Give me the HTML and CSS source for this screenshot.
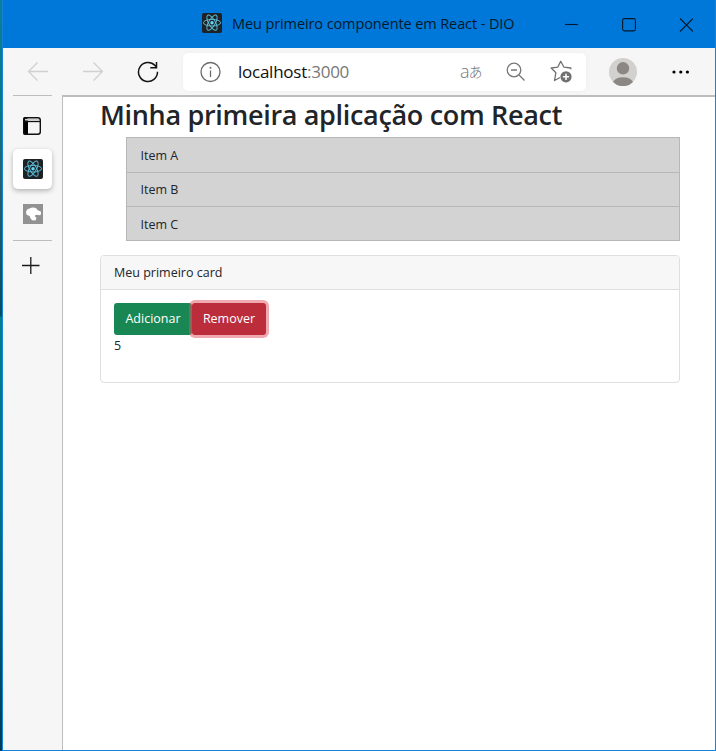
FILE: index.html
```html
<!DOCTYPE html>
<html lang="pt-BR">
<head>
<meta charset="utf-8">
<title>Meu primeiro componente em React - DIO</title>
<link rel="stylesheet" href="styles.css">
</head>
<body>
<svg width="0" height="0" class="defs">
  <symbol id="react" viewBox="0 0 20 20">
    <rect width="20" height="20" rx="2" fill="#202124"/>
    <g fill="none" stroke="#58b9d2" stroke-width="1">
      <ellipse cx="10" cy="9.700" rx="8.600" ry="3.300"/>
      <ellipse cx="10" cy="9.700" rx="8.600" ry="3.300" transform="rotate(60 10 9.7)"/>
      <ellipse cx="10" cy="9.700" rx="8.600" ry="3.300" transform="rotate(120 10 9.7)"/>
    </g>
    <circle cx="10" cy="9.700" r="1.700" fill="#61dafb"/>
  </symbol>
</svg>
<div class="desktop">
  <div class="window">
    <header class="titlebar">
      <svg class="favicon" width="20" height="20"><use href="#react"/></svg>
      <span class="title">Meu primeiro componente em React - DIO</span>
      <svg class="controls" width="128" height="20" fill="none" stroke="#06192c" stroke-width="1.1">
        <path d="M0 11.500h13"/>
        <rect x="57.600" y="5.600" width="12.800" height="12.300" rx="1.800"/>
        <path d="M115 5.500l13 13M128 5.500l-13 13"/>
      </svg>
    </header>
    <nav class="toolbar">
      <svg class="back" width="22" height="20" fill="none" stroke="#d0d0d0" stroke-width="1.3"><path d="M21 9.500H1.500M10.500 .5L1.500 9.500l9 9"/></svg>
      <svg class="forward" width="22" height="20" fill="none" stroke="#d0d0d0" stroke-width="1.3"><path d="M1 9.500h19.500M11.500 .5l9 9-9 9"/></svg>
      <svg class="reload" width="22" height="22" fill="none" stroke="#151515" stroke-width="1.5"><path d="M20.500 10.700A9.500 9.500 0 1 1 18 4.600L19.500 6.300M19.500 1v5.700H13.300"/></svg>
      <div class="address">
        <svg class="info" width="22" height="22" fill="none" stroke="#6b6b6b" stroke-width="1.3"><circle cx="11.500" cy="11" r="9.500"/><path d="M11.500 9.500v6.500"/><circle cx="11.500" cy="6.800" r=".4" fill="#6b6b6b"/></svg>
        <span class="url">localhost<span class="port">:3000</span></span>
        <span class="translate"><span>a</span><span class="kana">あ</span></span>
        <svg class="search" width="20" height="20" fill="none" stroke="#777" stroke-width="1.3"><circle cx="8" cy="8" r="6.800"/><path d="M5 8h6M13 13l5.500 5.500"/></svg>
        <svg class="star" width="24" height="23" fill="none" stroke="#707070" stroke-width="1.300" stroke-linejoin="round"><path d="M20.800 9.200V8L14 7.200 10.700 1.200 7.700 7.200 1.200 8l4.700 4.700L4.500 20.500l5.500-3"/><circle cx="16" cy="16.800" r="5.600" fill="#707070" stroke="none"/><path stroke="#fff" stroke-width="1.500" d="M16 13.700v6.200M12.900 16.800h6.200"/></svg>
      </div>
      <svg class="avatar" width="28" height="28"><circle cx="14" cy="14" r="14" fill="#d3d1ce"/><circle cx="14" cy="10.300" r="6.200" fill="#8b8784"/><path d="M4 24a10.500 7 0 0 1 20 0a14 14 0 0 1-20 0" fill="#8b8784"/></svg>
      <svg class="more" width="18" height="4"><circle cx="2" cy="2" r="1.600"/><circle cx="8.800" cy="2" r="1.600"/><circle cx="15.400" cy="2" r="1.600"/></svg>
    </nav>
    <div class="body">
      <aside class="sidebar">
        <hr>
        <svg class="tabs" width="18" height="18"><path d="M4 0H1.800Q0 0 0 2v14q0 2 2 2h3V4z"/><rect x=".7" y=".7" width="16.600" height="16.600" rx="2.500" fill="none" stroke="#111" stroke-width="1.400"/><path d="M0 4.500h18" stroke="#111" stroke-width="1.300"/><path d="M2 2.700h14" stroke="#ccc" stroke-width="1.600"/></svg>
        <div class="active"><svg width="20" height="20"><use href="#react"/></svg></div>
        <svg class="site" width="20" height="20"><rect width="20" height="20" fill="#929292"/><path fill="#fff" d="M3 9q0-4 3.500-4.500Q10 2.500 13.500 4.500l1 1.500 3.500 1.700v2.600l-1 .9-4-.4-1.300 1.200 1.800 2-1 2.500-3.500-.3-2-2.700-.3-1.600L4 11z"/></svg>
        <hr>
        <svg class="plus" width="18" height="18"><path d="M0 8.500h17.500M8.800 0v17" stroke="#1b1b1b" stroke-width="1.300"/></svg>
      </aside>
      <main class="page">
        <h1>Minha primeira aplicação com React</h1>
        <ul class="list">
          <li>Item A</li>
          <li>Item B</li>
          <li>Item C</li>
        </ul>
        <section class="card">
          <div class="card-header"><span>Meu primeiro card</span></div>
          <div class="card-body">
            <div class="buttons"><button class="add">Adicionar</button><button class="remove">Remover</button></div>
            <p>5</p>
          </div>
        </section>
      </main>
    </div>
  </div>
</div>
</body>
</html>
```
FILE: styles.css
```css
* { box-sizing: border-box; }
body { margin: 0; font-family: "Open Sans", "Noto Sans CJK JP", sans-serif; color: #212529; }
svg { display: block; flex: none; }
.defs { position: absolute; }
.desktop { height: 751px; padding-left: 2px; background: linear-gradient(#087f9b 0, #087985 100px, #286469 180px, #064f60 316px, #007f8c 317px, #007487 500px, #003d55 751px); }
.window { width: 714px; height: 751px; border: 1px solid #1683d8; border-top: 0; background: #fff; display: flex; flex-direction: column; }
.titlebar { height: 48px; flex: none; background: #0078d9; display: flex; align-items: flex-start; padding: 13px 0 0 199px; white-space: nowrap; }
.title { width: 333px; margin-left: 10px; font-size: 14.5px; line-height: 20px; color: #04192d; letter-spacing: -.1px; padding-top: 1px; }
.toolbar { height: 47px; flex: none; background: #f6f6f6; display: flex; align-items: center; padding-left: 24px; }
.forward { margin-left: 33px; }
.reload { margin-left: 33px; }
.address { display: flex; align-items: center; width: 403px; height: 38px; margin-left: 24px; padding-left: 16px; border-radius: 5px; background: #fff; box-shadow: 0 0 4px #0000000a; }
.url { width: 222px; margin-left: 17px; font-size: 17px; line-height: 24px; color: #111; letter-spacing: -.25px; }
.port { color: #777; }
.translate { display: flex; align-items: center; width: 23px; font-size: 18px; line-height: 22px; color: #777; font-weight: 300; }
.translate > span { position: relative; top: -1px; }
.translate .kana { font-family: "Noto Sans CJK JP", sans-serif; font-size: 14px; margin-left: -1px; }
.search { margin-left: 23px; }
.star { margin-left: 24px; }
.avatar { margin-left: 23px; }
.more { margin-left: 35px; }
.body { display: flex; flex: 1; background: #f6f6f6; }
.sidebar { width: 59px; display: flex; flex-direction: column; align-items: flex-start; padding-left: 10px; }
hr { width: 39px; height: 1px; margin: 0; border: 0; background: #bdbdbd; }
.tabs { margin: 21px 0 0 10px; }
.active { width: 39px; height: 40px; margin-top: 14px; padding: 10px; border-radius: 5px; background: #fff; box-shadow: 0 2px 5px #0004; }
.site { margin: 15px 0 16px 10px; }
.plus { margin: 16px 0 0 9px; }
.page { flex: 1; border-top: 2px solid #bdbdbd; border-left: 1px solid #bdbdbd; background: #fff; padding: 0 35px 0 37px; }
h1 { margin: 0; height: 40px; font-size: 27px; line-height: 35px; font-weight: 600; letter-spacing: -.32px; white-space: nowrap; }
.list { list-style: none; margin: 0 0 14px 26px; padding: 0; border: 1px solid #b7b7b7; background: #d3d3d3; font-size: 12.5px; }
.list li { height: 34px; line-height: 34px; padding-left: 13.5px; }
.list li:first-child { height: 35px; line-height: 35px; }
.list li:last-child { height: 33px; line-height: 35px; }
.list li:not(:last-child) { border-bottom: 1px solid #b7b7b7; }
.card { height: 128px; border: 1px solid #dfdfdf; border-radius: 4px; font-size: 12.5px; }
.card-header { height: 34px; line-height: 33px; padding-left: 13px; background: #f7f7f7; border-bottom: 1px solid #dfdfdf; border-radius: 3px 3px 0 0; }
.card-body { padding: 13px; }
.buttons { display: flex; }
button { height: 32px; border: 0; border-radius: 3px; padding: 0; color: #fff; font: 500 12.5px/32px "Open Sans", sans-serif; }
.add { width: 78px; background: #198754; }
.remove { width: 74px; background: #bb2d3b; box-shadow: 0 0 0 3px #e1536180; }
p { margin: 0; line-height: 22px; }
```
